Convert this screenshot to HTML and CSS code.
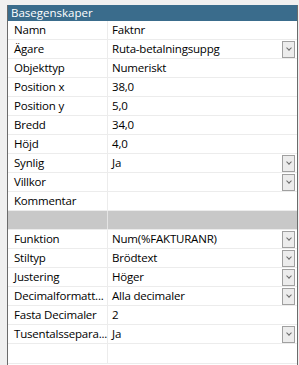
FILE: index.html
```html
<!DOCTYPE html>
<html lang="sv">

<head>
    <meta charset="UTF-8">
    <title>Basegenskaper</title>
    <link rel="stylesheet" href="styles.css">
</head>

<body>
    <div id="props">
        <div class="head">Basegenskaper</div>
        <div class="row"><span class="key">Namn</span><span class="val">Faktnr</span></div>
        <div class="row"><span class="key">Ägare</span><span class="val">Ruta-betalningsuppg<i class="drop"></i></span></div>
        <div class="row"><span class="key">Objekttyp</span><span class="val">Numeriskt</span></div>
        <div class="row"><span class="key">Position x</span><span class="val">38,0</span></div>
        <div class="row"><span class="key">Position y</span><span class="val">5,0</span></div>
        <div class="row"><span class="key">Bredd</span><span class="val">34,0</span></div>
        <div class="row"><span class="key">Höjd</span><span class="val">4,0</span></div>
        <div class="row"><span class="key">Synlig</span><span class="val">Ja<i class="drop"></i></span></div>
        <div class="row"><span class="key">Villkor</span><span class="val"><i class="drop"></i></span></div>
        <div class="row"><span class="key">Kommentar</span><span class="val"></span></div>
        <div class="row group"><span class="key"></span><span class="val"></span></div>
        <div class="row"><span class="key">Funktion</span><span class="val">Num(%FAKTURANR)<i class="drop"></i></span></div>
        <div class="row"><span class="key">Stiltyp</span><span class="val">Brödtext<i class="drop"></i></span></div>
        <div class="row"><span class="key">Justering</span><span class="val">Höger<i class="drop"></i></span></div>
        <div class="row"><span class="key">Decimalformatt...</span><span class="val">Alla decimaler<i class="drop"></i></span></div>
        <div class="row"><span class="key">Fasta Decimaler</span><span class="val">2</span></div>
        <div class="row"><span class="key">Tusentalssepara...</span><span class="val">Ja<i class="drop"></i></span></div>
        <div class="row last"><span class="key"></span><span class="val"></span></div>
    </div>
</body>

</html>
```

FILE: styles.css
```css
* {
    box-sizing: border-box;
}

body {
    margin: 0;
    height: 365px;
    overflow: hidden;
    background-color: #f0f0f0;
    font-family: "Open Sans", "Noto Sans", sans-serif;
    font-size: 11.5px;
    letter-spacing: -0.2px;
    color: #000;
}

#props {
    margin: 5px 0 0 7px;
    width: 291px;
    height: 360px;
    overflow: hidden;
    background-color: #fff;
    border-left: 1px solid #6b6b6b;
    border-right: 1px solid #6b6b6b;
}

#props>.head {
    height: 16px;
    line-height: 16px;
    padding-left: 3px;
    background-color: #3a6c8c;
    color: #fff;
    letter-spacing: 0;
}

#props>.row {
    display: flex;
    height: 19px;
    border-bottom: 1px solid #ececec;
}

#props>.row.last {
    height: 20px;
}

#props>.row>span {
    display: flex;
    align-items: center;
    line-height: 18px;
}

#props>.row>.key {
    width: 100px;
    padding-left: 6px;
    border-right: 1px solid #ececec;
    white-space: nowrap;
}

#props>.row>.val {
    flex: 1;
    padding-left: 4px;
    padding-right: 2px;
}

#props>.row.group>span {
    background-color: #c8c8c8;
}

#props>.row.group>.key {
    border-right-color: #e4e4e4;
}

.drop {
    margin-left: auto;
    width: 13px;
    height: 17px;
    border: 1px solid #a0a0a0;
    background-color: #ececec;
    display: flex;
    align-items: center;
    justify-content: center;
}

.drop::after {
    content: "";
    width: 3px;
    height: 3px;
    border-right: 1.5px solid #6a6a6a;
    border-bottom: 1.5px solid #6a6a6a;
    transform: rotate(45deg);
    margin-top: -2px;
}
```
